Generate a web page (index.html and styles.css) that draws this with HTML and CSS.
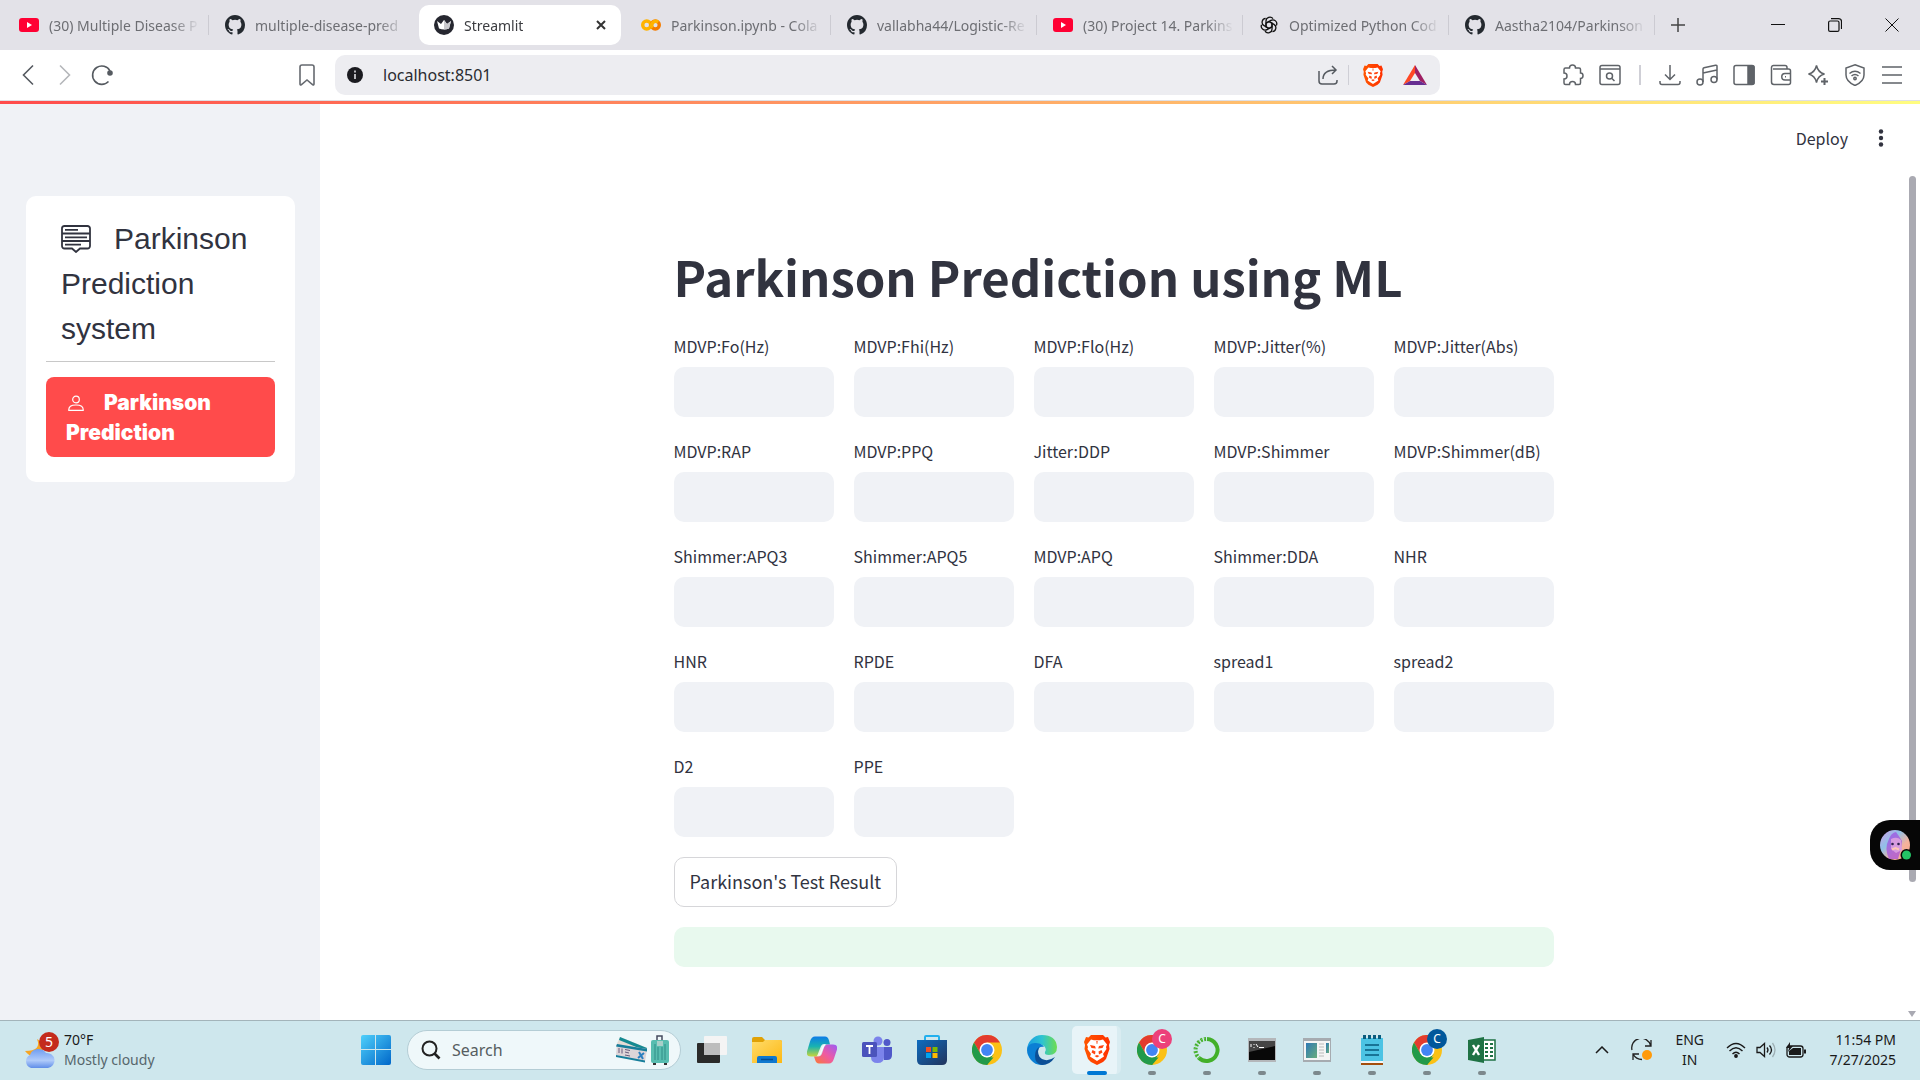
FILE: index.html
```html
<!DOCTYPE html>
<html lang="en">
<head>
<meta charset="utf-8">
<meta name="viewport" content="width=device-width, initial-scale=1">
<title>Streamlit</title>
<link rel="stylesheet" href="styles.css">
</head>
<body>
<svg class="defs" aria-hidden="true">
  <defs>
    <linearGradient id="g-win" x1="0" y1="0" x2="1" y2="1"><stop offset="0" stop-color="#4fd0fb"/><stop offset="1" stop-color="#0067c9"/></linearGradient>
    <linearGradient id="g-folder" x1="0" y1="0" x2="1" y2="1"><stop offset="0" stop-color="#ffdc6b"/><stop offset="1" stop-color="#fdb813"/></linearGradient>
    <linearGradient id="g-store" x1="0" y1="0" x2="1" y2="1"><stop offset="0" stop-color="#0d6cc0"/><stop offset="1" stop-color="#22345c"/></linearGradient>
    <linearGradient id="g-cop1" x1="0" y1="0" x2="0" y2="1"><stop offset="0" stop-color="#0d7be8"/><stop offset=".5" stop-color="#19b3b0"/><stop offset="1" stop-color="#c8d63a"/></linearGradient>
    <linearGradient id="g-cop2" x1="1" y1="0" x2="0" y2="1"><stop offset="0" stop-color="#9b5cf6"/><stop offset=".5" stop-color="#ee5aa3"/><stop offset="1" stop-color="#fb7a33"/></linearGradient>
    <linearGradient id="g-edge1" x1="0" y1="0" x2="1" y2="0"><stop offset="0" stop-color="#1b9de2"/><stop offset=".5" stop-color="#2cc3d2"/><stop offset="1" stop-color="#6fdd4e"/></linearGradient>
    <linearGradient id="g-brave" x1="0" y1="0" x2="1" y2="0"><stop offset="0" stop-color="#ff5601"/><stop offset="1" stop-color="#ff3000"/></linearGradient>
    <linearGradient id="g-cloud" x1="0" y1="0" x2="0" y2="1"><stop offset="0" stop-color="#6f9df0"/><stop offset=".6" stop-color="#b0cbfa"/><stop offset="1" stop-color="#5f8de8"/></linearGradient>
    <linearGradient id="g-app" x1="0" y1="0" x2="1" y2="1"><stop offset="0" stop-color="#2f79b5"/><stop offset="1" stop-color="#69ad7c"/></linearGradient>
    <linearGradient id="g-face" x1="0" y1="0" x2="1" y2="1"><stop offset="0" stop-color="#d49ce8"/><stop offset=".35" stop-color="#8fc0e8"/><stop offset=".65" stop-color="#f5b29c"/><stop offset="1" stop-color="#f7a98a"/></linearGradient>
    <symbol id="youtube" viewBox="0 0 20 20"><rect y="3" width="20" height="14" rx="3" fill="#ff0033"/><path d="M8 7l5 3-5 3z" fill="#fff"/></symbol>
    <symbol id="github" viewBox="0 0 16 16"><path fill="#24292f" d="M8 0C3.58 0 0 3.58 0 8c0 3.54 2.29 6.53 5.47 7.59.4.07.55-.17.55-.38 0-.19-.01-.82-.01-1.49-2.01.37-2.53-.49-2.69-.94-.09-.23-.48-.94-.82-1.13-.28-.15-.68-.52-.01-.53.63-.01 1.08.58 1.23.82.72 1.21 1.87.87 2.33.66.07-.52.28-.87.51-1.07-1.78-.2-3.64-.89-3.64-3.95 0-.87.31-1.59.82-2.15-.08-.2-.36-1.02.08-2.12 0 0 .67-.21 2.2.82a7.6 7.6 0 0 1 4 0c1.53-1.04 2.2-.82 2.2-.82.44 1.1.16 1.92.08 2.12.51.56.82 1.27.82 2.15 0 3.07-1.87 3.75-3.65 3.95.29.25.54.73.54 1.48 0 1.07-.01 1.93-.01 2.2 0 .21.15.46.55.38A8.01 8.01 0 0 0 16 8c0-4.42-3.58-8-8-8z"/></symbol>
    <symbol id="streamlit" viewBox="0 0 20 20"><circle cx="10" cy="10" r="10" fill="#262730"/><path d="M3 6l4 3 3-4 3 4 4-3-2 7.500q-5 2-10 0z" fill="#fff"/><path d="M10 5l3 4 4-3-2 7.500q-2.500 1-5 1z" fill="#c9c9cd"/></symbol>
    <symbol id="colab" viewBox="0 0 20 20"><g fill="none" stroke-width="3.400"><circle cx="5.700" cy="10" r="4" stroke="#ffb300"/><circle cx="14.300" cy="10" r="4" stroke="#f57c00"/><path d="M11.500 12.800a4 4 0 0 1 5.600-5.600" stroke="#ffb300"/></g></symbol>
    <symbol id="openai" viewBox="0 0 20 20"><g fill="none" stroke="#111" stroke-width="1.300"><path id="petal" d="M7 11.700V6a3.900 3.900 0 0 1 7-2.300M7 8.300l4.900-2.900a3.900 3.900 0 0 1 5.500 5"/><use href="#petal" transform="rotate(120 10 10)"/><use href="#petal" transform="rotate(240 10 10)"/><path d="M10 6.500l3 1.700v3.600l-3 1.700-3-1.700V8.200z"/></g></symbol>
    <symbol id="brave" viewBox="0 0 26 30"><path fill="url(#g-brave)" d="M7 0h12l2.500 2.500L24 2l2 5-1 3 .5 4-3.500 10-3 3-6 3-6-3-3-3L.5 14 1 10 0 7l2-5 2.500.5z"/><path fill="#fff" d="M7 4.500l3 .8h6l3-.8 4 5-1 2.500.5 2-3.500 5 1 2.500-7 4.500-7-4.500 1-2.500-3.500-5 .5-2-1-2.500z"/><path fill="#ff4510" d="M6 10l5 1 .8 2.500-4.300-.5zM20 10l-5 1-.8 2.500 4.300-.5zM8.500 15l3 1.500-.5 3-3.500-2zM17.500 15l-3 1.500.5 3 3.500-2zM10.500 21l2.500-1 2.500 1-2.500 1.500zM12.300 6h1.400l-.4 3h-.6z"/></symbol>
    <symbol id="chrome" viewBox="0 0 30 30"><circle cx="15" cy="15" r="15" fill="#fbc116"/><path fill="#e33b2e" d="M2 7.500a15 15 0 0 1 26 0H15v7.500l-6.500 3.800z"/><path fill="#229a4a" d="M2 7.500l6.500 11.300L15 22.500h6.500L15 30A15 15 0 0 1 2 7.500z"/><path fill="#229a4a" d="M15 22.500l6.500-3.800L15 30z"/><circle cx="15" cy="15" r="7.500" fill="#fff"/><circle cx="15" cy="15" r="5.900" fill="#4285f4"/></symbol>
  </defs>
</svg>

<header class="browser">
  <nav class="tabs" aria-label="Tabs">
    <a class="tab" href="#"><svg class="fav"><use href="#youtube"/></svg><span class="tab-text">(30) Multiple Disease P</span></a>
    <a class="tab no-line" href="#"><svg class="fav"><use href="#github"/></svg><span class="tab-text">multiple-disease-pred</span></a>
    <div class="tab active"><svg class="fav"><use href="#streamlit"/></svg><span class="tab-text">Streamlit</span><button class="bare" aria-label="Close tab"><svg width="10" height="10" viewBox="0 0 10 10"><path d="M1 1l8 8M9 1L1 9" stroke="#333" stroke-width="2"/></svg></button></div>
    <a class="tab" href="#"><svg class="fav"><use href="#colab"/></svg><span class="tab-text">Parkinson.ipynb - Cola</span></a>
    <a class="tab" href="#"><svg class="fav"><use href="#github"/></svg><span class="tab-text">vallabha44/Logistic-Re</span></a>
    <a class="tab" href="#"><svg class="fav"><use href="#youtube"/></svg><span class="tab-text">(30) Project 14. Parkins</span></a>
    <a class="tab" href="#"><svg class="fav"><use href="#openai"/></svg><span class="tab-text">Optimized Python Cod</span></a>
    <a class="tab" href="#"><svg class="fav"><use href="#github"/></svg><span class="tab-text">Aastha2104/Parkinson</span></a>
    <button class="bare new-tab" aria-label="New tab"><svg width="14" height="14" viewBox="0 0 14 14"><path d="M7 0v14M0 7h14" stroke="#444" stroke-width="1.500"/></svg></button>
    <div class="window-buttons">
      <button class="bare" aria-label="Minimize"><svg width="14" height="14" viewBox="0 0 14 14"><path d="M0 6.500h14" stroke="#111"/></svg></button>
      <button class="bare" aria-label="Restore"><svg width="14" height="14" viewBox="0 0 14 14" fill="none" stroke="#111" stroke-width="1.200"><rect x=".6" y="3" width="10.400" height="10.400" rx="1.500"/><path d="M3 .6h7.500a3 3 0 0 1 3 3V11"/></svg></button>
      <button class="bare" aria-label="Close"><svg width="14" height="14" viewBox="0 0 14 14"><path d="M.5 .5l13 13M13.500 .5l-13 13" stroke="#111"/></svg></button>
    </div>
  </nav>
  <div class="toolbar">
    <div class="nav-buttons">
      <button class="bare" aria-label="Back"><svg width="22" height="22" viewBox="0 0 22 22" fill="none" stroke="#555a60" stroke-width="1.600"><path d="M16 1.500L6.500 11l9.500 9.500"/></svg></button>
      <button class="bare" aria-label="Forward"><svg width="22" height="22" viewBox="0 0 22 22" fill="none" stroke="#b5b7ba" stroke-width="1.600"><path d="M6 1.500l9.500 9.500L6 20.500"/></svg></button>
      <button class="bare" aria-label="Reload"><svg width="22" height="22" viewBox="0 0 22 22" fill="none" stroke="#555a60" stroke-width="1.600"><path d="M17.500 17.500A9.200 9.200 0 1 1 19 7"/><circle cx="19" cy="9" r="2" fill="#555a60"/></svg></button>
    </div>
    <button class="bare" aria-label="Bookmark"><svg width="16" height="22" viewBox="0 0 16 22" fill="none" stroke="#666a70" stroke-width="1.600"><path d="M1 20V3a2 2 0 0 1 2-2h10a2 2 0 0 1 2 2v17q0 1.500-1.500.5L8 16l-5.500 4.500Q1 21.500 1 20z"/></svg></button>
    <div class="address">
      <svg width="16" height="16" viewBox="0 0 16 16"><circle cx="8" cy="8" r="8" fill="#1b1b20"/><path d="M8 7v5M8 3.500v2" stroke="#ededf1" stroke-width="1.500"/></svg>
      <input class="url" type="text" value="localhost:8501" aria-label="Address">
      <svg width="20" height="20" viewBox="0 0 20 20" fill="none" stroke="#555a60" stroke-width="1.500"><path d="M1 6v10a3 3 0 0 0 3 3h12a3 3 0 0 0 3-3v-1M5 14c0-6 4-9 13-9M14 1l4 4-4 4"/></svg>
      <span class="rule"></span>
      <svg class="addr-brave" width="20" height="23"><use href="#brave"/></svg>
      <svg width="24" height="20" viewBox="0 0 24 20"><path d="M12 0L0 20l7-4 5-8z" fill="#ff4724"/><path d="M12 0l12 20-7-4-5-8z" fill="#9e1f63"/><path d="M0 20h24l-7-4H7z" fill="#662d91"/></svg>
    </div>
    <div class="extensions">
      <button class="bare" aria-label="Extensions"><svg class="line-icon" viewBox="0 0 22 22"><path d="M3.500 4h4a3 3 0 1 1 6 0H17q1.500 0 1.500 1.500V9q2.500 0 2.500 2.700t-2.500 2.800v4.500q0 1.500-1.500 1.500h-3.500q0-3-3-3t-3 3h-4Q2 20.500 2 19v-4q3 0 3-3T2 9V5.500Q2 4 3.500 4z"/></svg></button>
      <button class="bare" aria-label="Search page"><svg class="line-icon" viewBox="0 0 22 22"><rect x="1" y="1.500" width="20" height="19" rx="2"/><path d="M1 5h20"/><circle cx="10.500" cy="12" r="3"/><path d="M13 14.500l2.500 2.500"/></svg></button>
      <span class="rule wide"></span>
      <button class="bare" aria-label="Downloads"><svg class="line-icon" viewBox="0 0 22 22"><path d="M11 1v14M6 10.500l5 5 5-5M1 17v1.500a2 2 0 0 0 2 2h16a2 2 0 0 0 2-2V17"/></svg></button>
      <button class="bare" aria-label="Media"><svg class="line-icon" viewBox="0 0 22 22"><circle cx="4" cy="18" r="3"/><circle cx="18" cy="15.500" r="3"/><path d="M7 18V5q0-1 1-1.300l11.500-2.500q1.500-.2 1.500 1V15.500M7 9l14-3"/></svg></button>
      <button class="bare" aria-label="Sidebar"><svg class="line-icon" viewBox="0 0 22 22"><rect x="1" y="1.500" width="20" height="19" rx="2"/><path d="M15 2h5q1 0 1 1v16q0 1-1 1h-5z" fill="#5f6368"/></svg></button>
      <button class="bare" aria-label="Wallet"><svg class="line-icon" viewBox="0 0 22 22"><path d="M17 5V3.500a2 2 0 0 0-2-2H3.500a2 2 0 0 0-2 2V18a2.500 2.500 0 0 0 2.500 2.500h14.500a2 2 0 0 0 2-2V7a2 2 0 0 0-2-2H3M21 9.500h-6a3 3 0 0 0 0 6.500h6M15 12.700h1"/></svg></button>
      <button class="bare" aria-label="Assistant"><svg class="line-icon" viewBox="0 0 22 22"><path d="M9.500 1.500q1.500 7 8 8.500-6.500 1.500-8 8.500-1.500-7-8-8.500 6.500-1.500 8-8.500z"/><path d="M17.500 14v7M14 17.500h7" stroke-width="2"/></svg></button>
      <button class="bare" aria-label="VPN"><svg class="line-icon" viewBox="0 0 22 22"><path d="M11 .8l9 3.200v7q0 6.500-9 10.500-9-4-9-10.500V4zM5.500 9.500q5.500-4.500 11 0M7.500 12q3.500-3 7 0"/><circle cx="11" cy="14.500" r="1.200"/></svg></button>
      <button class="bare" aria-label="Menu"><svg class="line-icon" viewBox="0 0 22 22"><path d="M1 3h20M1 11h20M1 19h20"/></svg></button>
    </div>
  </div>
</header>
<div class="decoration"></div>

<div class="app">
  <aside class="sidebar">
    <div class="menu-card">
      <h2 class="menu-title"><svg class="menu-icon" viewBox="0 0 30 28" fill="none" stroke="#31333f" stroke-width="1.800"><path d="M1 3a2.500 2.500 0 0 1 2.500-2h23A2.500 2.500 0 0 1 29 3.500V21a2.500 2.500 0 0 1-2.500 2.500H19L15 27l-4-3.500H3.500A2.500 2.500 0 0 1 1 21zM1 8.500h28M1 16h28M4 4.800h13M4 12.300h22M4 19.700h16"/></svg>Parkinson Prediction system</h2>
      <hr class="menu-rule">
      <a class="menu-item" href="#"><svg class="person" viewBox="0 0 16 16" fill="none" stroke="#fff" stroke-width="1.200"><circle cx="8" cy="4.500" r="3.300"/><path d="M.8 15.300q-.4-5.300 7.200-5.300t7.200 5.300z"/></svg>Parkinson Prediction</a>
    </div>
  </aside>
  <main class="main">
    <div class="app-bar"><button class="bare deploy">Deploy</button><button class="bare" aria-label="Main menu"><svg width="6" height="18" viewBox="0 0 6 18" fill="#31333f"><circle cx="3" cy="2.500" r="2.200"/><circle cx="3" cy="9" r="2.200"/><circle cx="3" cy="15.500" r="2.200"/></svg></button></div>
    <form class="content">
      <h1 class="title">Parkinson Prediction using ML</h1>
      <div class="fields">
        <label class="field">MDVP:Fo(Hz)<input class="box" type="text"></label>
        <label class="field">MDVP:Fhi(Hz)<input class="box" type="text"></label>
        <label class="field">MDVP:Flo(Hz)<input class="box" type="text"></label>
        <label class="field">MDVP:Jitter(%)<input class="box" type="text"></label>
        <label class="field">MDVP:Jitter(Abs)<input class="box" type="text"></label>
        <label class="field">MDVP:RAP<input class="box" type="text"></label>
        <label class="field">MDVP:PPQ<input class="box" type="text"></label>
        <label class="field">Jitter:DDP<input class="box" type="text"></label>
        <label class="field">MDVP:Shimmer<input class="box" type="text"></label>
        <label class="field">MDVP:Shimmer(dB)<input class="box" type="text"></label>
        <label class="field">Shimmer:APQ3<input class="box" type="text"></label>
        <label class="field">Shimmer:APQ5<input class="box" type="text"></label>
        <label class="field">MDVP:APQ<input class="box" type="text"></label>
        <label class="field">Shimmer:DDA<input class="box" type="text"></label>
        <label class="field">NHR<input class="box" type="text"></label>
        <label class="field">HNR<input class="box" type="text"></label>
        <label class="field">RPDE<input class="box" type="text"></label>
        <label class="field">DFA<input class="box" type="text"></label>
        <label class="field">spread1<input class="box" type="text"></label>
        <label class="field">spread2<input class="box" type="text"></label>
        <label class="field">D2<input class="box" type="text"></label>
        <label class="field">PPE<input class="box" type="text"></label>
      </div>
      <button class="submit" type="button">Parkinson's Test Result</button>
      <output class="result"></output>
    </form>
    <div class="scrollbar"><span class="thumb"></span><svg width="8" height="6" viewBox="0 0 8 6"><path d="M0 0h8L4 6z" fill="#a9a9b2"/></svg></div>
    <button class="bare assistant" aria-label="Assistant"><svg width="34" height="34" viewBox="0 0 34 34"><circle cx="15" cy="15" r="15" fill="url(#g-face)"/><path d="M9 29q-5-11 0-20 2-6 7-7 3 4 6 9l-1 8-3 10z" fill="#a14be0" opacity=".7"/><path d="M11 9q6-3 10 1l1 10-6 3-5-4z" fill="#d79be0"/><circle cx="12.500" cy="14" r="1.300" fill="#302050"/><circle cx="18.500" cy="14" r="1.300" fill="#302050"/><path d="M12 19.500l3.500-1.500 3.500 1.500" stroke="#ffc6b4" stroke-width="2" fill="none"/><circle cx="26.500" cy="25" r="6" fill="#060606"/><circle cx="26.500" cy="25" r="4.500" fill="#24c466"/></svg></button>
  </main>
</div>

<footer class="taskbar">
  <div class="weather">
    <svg width="35" height="37" viewBox="0 0 35 37"><path d="M13 7q5 12-12 12 8 10 16 2 7-8-4-14z" fill="#f6a523"/><path d="M7 36a7 7 0 0 1-1-13 9 9 0 0 1 16-2 7.500 7.500 0 1 1 2 15z" fill="url(#g-cloud)"/><circle cx="25" cy="10" r="10" fill="#c42b1c"/><text x="25" y="15" text-anchor="middle" class="badge-count">5</text></svg>
    <div class="two-lines"><span>70°F</span><span class="muted">Mostly cloudy</span></div>
  </div>
  <div class="apps">
    <button class="bare start" aria-label="Start"><svg width="30" height="30" viewBox="0 0 30 30" fill="url(#g-win)"><path d="M2 0h12v14H0V2q0-2 2-2zM15 0h13q2 0 2 2v12H15zM0 15h14v15H2q-2 0-2-2zM15 15h15v13q0 2-2 2H15z"/></svg></button>
    <label class="search">
      <svg width="20" height="20" viewBox="0 0 20 20" fill="none" stroke="#222" stroke-width="2"><circle cx="8.500" cy="8.500" r="7"/><path d="M13.500 13.500l5 5" stroke-width="2.600"/></svg>
      <input class="search-input" type="text" placeholder="Search" aria-label="Search">
      <svg width="54" height="30" viewBox="0 0 54 30"><path d="M5 2l27 11-2 6L1 11z" fill="#e5dcd5"/><path d="M5 2l27 11-1 3L4 5z" fill="#148a92"/><path d="M2 9l30 5-2 13L1 20z" fill="#ddd5d8"/><path d="M2 9l30 5v2.500L1 11.500zM1 20l29 5.500v2L1 22z" fill="#167e9b"/><path d="M4 13v5M7 13.500v5M10 14.500l5 1M10 17l4 1M10 20l5 1" stroke="#665b7c"/><path d="M24 17l4 7M29 18l-6 5" stroke="#2a7fc0" stroke-width="2"/><path d="M42 6V1h5v5" fill="none" stroke="#454a5e" stroke-width="1.500"/><rect x="36" y="5" width="18" height="23" rx="2" fill="#58bdb0"/><path d="M40 9v16M43 12v13M47 12v13M50 9v16" stroke="#2f8c86"/><path d="M42 6h6v5h-6z" fill="#a9cfc9"/><path d="M38 29h3M49 29h3" stroke="#333" stroke-width="2"/></svg>
    </label>
    <button class="bare cell" aria-label="Task view"><svg width="30" height="30" viewBox="0 0 30 30"><rect y="8" width="23" height="20" rx="1" fill="#2b2b2a"/><rect x="7" y="1" width="23" height="19" rx="1" fill="#f4f4f4"/><path d="M7 8h16v12H7z" fill="#bdbdbd"/></svg></button>
    <button class="bare cell" aria-label="File Explorer"><svg width="30" height="30" viewBox="0 0 30 30"><path d="M0 4q0-2 2-2h8l3 3h15q2 0 2 2v4H0z" fill="#e0a106"/><path d="M0 7h11l2-2h15q2 0 2 2v21H0z" fill="url(#g-folder)"/><path d="M5 28v-5q0-2 2-2h16q2 0 2 2v5z" fill="#0f78cf"/><path d="M9 24.500h12" stroke="#064d92" stroke-width="1.500"/></svg></button>
    <button class="bare cell" aria-label="Copilot"><svg width="30" height="30" viewBox="0 0 30 30"><path d="M8 1.500h10q3 0 4 4l1 4h-4q-3 0-4 3l-2 6q-1 3-4 3H4q-5 0-4-5l3-10q1.500-5 5-5z" fill="url(#g-cop1)"/><path d="M22 28.500H12q-3 0-4-4l-1-3h4q3 0 4-3l2-6q1-3 4-3h5q5 0 4 5l-3 9q-1.500 5-5 5z" fill="url(#g-cop2)"/><path d="M14 11q1-2 3-2h2q-2 2-3 5l-2 5q-1 2-3 2h-1q1-2 2-5z" fill="#fff" opacity=".85"/></svg></button>
    <button class="bare cell" aria-label="Teams"><svg width="30" height="30" viewBox="0 0 30 30"><circle cx="25" cy="7.500" r="3.500" fill="#5059c9"/><circle cx="16" cy="6" r="4.500" fill="#7b83eb"/><path d="M20 12h10v8q0 5-5 5h-3z" fill="#5059c9"/><path d="M9 12h13v10q0 6-6.500 6T9 22z" fill="#7b83eb"/><rect y="7" width="15" height="15" rx="1.500" fill="#4b53bc"/><path d="M4 11h7M7.500 11v8" stroke="#fff" stroke-width="1.800"/></svg></button>
    <button class="bare cell" aria-label="Store"><svg width="30" height="30" viewBox="0 0 30 30"><path d="M8 7V2q0-1 1-1h12q1 0 1 1v5" fill="none" stroke="#22b0ee" stroke-width="2"/><path d="M0 5h30v20q0 5-5 5H5q-5 0-5-5z" fill="url(#g-store)"/><path d="M9 12h5v5H9z" fill="#f25022"/><path d="M15.500 12h5v5h-5z" fill="#7fba00"/><path d="M9 18h5v5H9z" fill="#00a4ef"/><path d="M15.500 18h5v5h-5z" fill="#ffb900"/></svg></button>
    <button class="bare cell" aria-label="Chrome"><svg width="30" height="30"><use href="#chrome"/></svg></button>
    <button class="bare cell" aria-label="Edge"><svg width="30" height="30" viewBox="0 0 30 30"><path d="M0 15A15 15 0 0 1 15 0q14 0 15 12 0 8-8 8-5 0-4-3 2-3-1-6Q9 5 0 15z" fill="url(#g-edge1)"/><path d="M0 15Q1 8 8 8q7 0 9 4-6-1-6 5 0 9 8 12Q10 32 4 25 0 20 0 15z" fill="#0b7fd4"/><path d="M12 12q-3 8 3 12 6 3 13-2-5 8-13 8-7-1-7-9 0-6 4-9z" fill="#0c4f96"/></svg></button>
    <button class="bare cell current" aria-label="Brave"><svg width="26" height="30"><use href="#brave"/></svg></button>
    <button class="bare cell running" aria-label="Chrome profile"><svg width="30" height="30"><use href="#chrome"/></svg><span class="profile pink">C</span></button>
    <button class="bare cell running" aria-label="Anaconda"><svg width="28" height="28" viewBox="0 0 28 28" fill="none"><path d="M14 3a11 11 0 1 1-8 19" stroke="#43b02a" stroke-width="4"/><path d="M13 3A11 11 0 0 0 6 22" stroke="#43b02a" stroke-width="4" stroke-dasharray="2 1.500"/><path d="M12 2A13 13 0 0 0 4 22" stroke="#8fd47f" stroke-dasharray="1 2"/></svg></button>
    <button class="bare cell running" aria-label="Command Prompt"><svg width="28" height="24" viewBox="0 0 28 24"><path d="M0 0h28v24H0z" fill="#b4b7ba"/><path d="M1 3h26v19H1z" fill="#080808"/><path d="M1 3h26v5L1 14z" fill="#454545"/><path d="M3 6v3M6 6v1M6 9v1M8 6l2 3M11 9.500h5" stroke="#fff"/></svg></button>
    <button class="bare cell running" aria-label="Application"><svg width="28" height="24" viewBox="0 0 28 24"><path d="M0 0h28v24H0z" fill="#a6abb0"/><path d="M1 3h26v19H1z" fill="#f5f5f5"/><path d="M3 5h11v15H3z" fill="url(#g-app)"/><path d="M16 6h5M16 9h5M16 12h5M16 15h5M16 18h5" stroke="#bbb"/><path d="M23 5h3v10h-3z" fill="url(#g-app)"/></svg></button>
    <button class="bare cell running" aria-label="Notepad"><svg width="22" height="30" viewBox="0 0 22 30"><path d="M0 3h22v23H0z" fill="#4cc3e4"/><path d="M0 26h22v2H0z" fill="#f5f5f5"/><path d="M0 28h22v2H0z" fill="#a34e0d"/><path d="M4 10h14M4 15h14M4 20h14" stroke="#07597c" stroke-width="1.600"/><path d="M2 2h3M7 2h3M12 2h3M17 2h3" stroke="#0a5c7e" stroke-width="4"/></svg></button>
    <button class="bare cell running" aria-label="Chrome profile 2"><svg width="30" height="30"><use href="#chrome"/></svg><span class="profile blue">C</span></button>
    <button class="bare cell running" aria-label="Excel"><svg width="28" height="26" viewBox="0 0 28 26"><path d="M14 3h13v20H14z" fill="#fff" stroke="#1f7244" stroke-width="1.500"/><path d="M17 7h3M22 7h3M17 11h3M22 11h3M17 15h3M22 15h3M17 19h3M22 19h3" stroke="#1f7244" stroke-width="2"/><path d="M0 3l16-3v26L0 23z" fill="#1f7244"/><path d="M5 8l6 10M11 8L5 18" stroke="#fff" stroke-width="2.400"/></svg></button>
  </div>
  <div class="tray">
    <button class="bare" aria-label="Hidden icons"><svg width="14" height="8" viewBox="0 0 14 8"><path d="M1 7l6-6 6 6" fill="none" stroke="#1a1a1a" stroke-width="1.500"/></svg></button>
    <svg class="sync" width="22" height="22" viewBox="0 0 22 22" fill="none" stroke="#222" stroke-width="1.300"><path d="M1 11A9.200 9.200 0 0 1 19.500 6.500M20 1v6h-6M2 21v-6h6M2 15q3 5.500 9 5.500"/><circle cx="16" cy="16" r="5" fill="#ff9a0a" stroke="none"/></svg>
    <div class="two-lines lang"><span>ENG</span><span>IN</span></div>
    <div class="status">
      <svg width="20" height="16" viewBox="0 0 20 16" fill="none" stroke="#1a1a1a" stroke-width="1.400"><path d="M1 6q9-9 18 0M3.500 9q6.500-6.500 13 0M6.500 12q3.500-3.500 7 0"/><circle cx="10" cy="14" r="1.200" fill="#1a1a1a"/></svg>
      <svg width="20" height="16" viewBox="0 0 20 16" fill="none" stroke="#1a1a1a" stroke-width="1.300"><path d="M1 5.500h3l4.500-4v13l-4.500-4H1zM11 5.500q2 2.500 0 5M13.500 3.500q4 4.500 0 9"/><path d="M16.500 1q5 7 0 14" stroke="#9fb0b5"/></svg>
      <svg width="20" height="16" viewBox="0 0 20 16"><rect x="1" y="4" width="16" height="11" rx="2.500" fill="none" stroke="#1a1a1a" stroke-width="1.300"/><path d="M3 13V9l4-3h8v7zM18 7.500h2v4h-2z" fill="#1a1a1a"/><path d="M4 0L0 6h3l-1 4 5-6H4z" fill="#1a1a1a"/></svg>
    </div>
    <div class="two-lines clock"><span>11:54 PM</span><span>7/27/2025</span></div>
  </div>
</footer>
</body>
</html>
```
FILE: styles.css
```css
* { box-sizing: border-box; }

:root {
  --ui: "Noto Sans", "Open Sans", sans-serif;
  --app: "Noto Sans CJK SC", "Noto Sans", sans-serif;
  --ink: #31333f;
  --panel: #f0f2f6;
}

body {
  margin: 0;
  min-height: 100vh;
  display: flex;
  flex-direction: column;
  font-family: var(--ui);
  font-size: 14px;
  color: #1a1a1a;
  background: #fff;
}

svg { display: block; flex: none; }
.defs { position: absolute; width: 0; height: 0; }
a { color: inherit; text-decoration: none; }
.bare {
  display: flex;
  align-items: center;
  justify-content: center;
  padding: 0;
  border: 0;
  background: none;
  font: inherit;
  color: inherit;
}
input { border: 0; padding: 0; background: none; font: inherit; color: inherit; min-width: 0; outline: 0; }

/* Browser chrome */
.tabs {
  display: flex;
  align-items: center;
  height: 50px;
  padding-left: 3px;
  background: #e3e2e8;
}
.tab {
  flex: 0 1 206px;
  min-width: 0;
  height: 20px;
  display: flex;
  align-items: center;
  gap: 10px;
  padding: 0 8px 0 16px;
  border-right: 1px solid #cccbd2;
  color: #6d6e73;
}
.no-line { border-color: transparent; }
.active {
  flex-basis: 202px;
  height: 40px;
  margin: 0 4px;
  padding: 0 15px;
  border: 0;
  border-radius: 10px;
  background: #fff;
  color: #3b3c40;
}
.fav { width: 20px; height: 20px; }
.tab-text {
  flex: 1;
  overflow: hidden;
  white-space: nowrap;
  mask-image: linear-gradient(to right, #000 calc(100% - 28px), transparent);
}
.new-tab { width: 46px; height: 40px; }
.window-buttons { display: flex; margin-left: auto; }
.window-buttons .bare { width: 57px; height: 50px; }

.toolbar {
  display: flex;
  align-items: center;
  height: 51px;
  padding-right: 17px;
  border-bottom: 1px solid #dfe0e5;
}
.nav-buttons { display: flex; gap: 15px; flex: 1 1 299px; padding-left: 17px; }
.address {
  flex: 1 1 1105px;
  display: flex;
  align-items: center;
  height: 40px;
  margin-left: 20px;
  padding: 0 13px 0 12px;
  border-radius: 10px;
  background: #ededf1;
}
.url { flex: 1; margin-left: 20px; font-size: 16px; color: #2a2b30; }
.rule { width: 1px; height: 20px; margin: 0 14px 0 10px; background: #cfcfd6; }
.addr-brave { margin-right: 20px; }
.extensions { flex: 0 1 463px; display: flex; align-items: center; justify-content: flex-end; gap: 15px; }
.line-icon { width: 22px; height: 22px; fill: none; stroke: #5f6368; stroke-width: 1.5; }
.wide { width: 2px; margin: 0 3px; }

.decoration { height: 3px; background: linear-gradient(to right, #ff4b4b, #fffd80); }

/* Application */
.app { flex: 1; display: flex; }
.sidebar { flex: none; width: 320px; padding: 92px 25px 0 26px; background: var(--panel); }
.menu-card { padding: 20px 20px 25px; border-radius: 10px; background: #fff; }
.menu-title {
  margin: 0;
  padding: 0 15px 10px;
  font: 400 30px/45px "Liberation Sans", Arial, sans-serif;
  color: var(--ink);
}
.menu-icon { display: inline-block; width: 30px; height: 28px; margin-right: 23px; vertical-align: -4px; }
.menu-rule { margin: 0 0 15px; border: 0; border-top: 1px solid #c8c8c8; }
.menu-item {
  display: block;
  padding: 11px 20px 9px;
  border-radius: 8px;
  background: #ff4b4b;
  color: #fff;
  font: 900 21px/30px Inter, "Open Sans", sans-serif;
}
.person { display: inline-block; width: 16px; height: 16px; margin: 0 20px 0 2px; vertical-align: -1px; }

.main { flex: 1; display: flex; position: relative; min-width: 0; }
.app-bar { position: absolute; top: 19px; right: 36px; display: flex; align-items: center; gap: 30px; height: 30px; color: var(--ink); }
.deploy { font: 400 16px/24px var(--app); }
.content {
  flex: 1;
  max-width: 880px;
  margin: 0 auto;
  padding: 136px 0 52px;
  font-family: var(--app);
  color: var(--ink);
}
.title { margin: 0 0 20px; font-size: 49px; line-height: 72px; font-weight: 700; white-space: nowrap; }
.fields { display: grid; grid-template-columns: repeat(5, 1fr); gap: 20px; }
.field { display: flex; flex-direction: column; gap: 7px; min-width: 0; font-size: 16px; line-height: 28px; }
.box { height: 50px; padding: 0 14px; border-radius: 10px; background: var(--panel); }
.submit {
  display: block;
  height: 50px;
  margin: 20px 0;
  padding: 0 15px 2px;
  border: 1px solid #d6d6d9;
  border-radius: 10px;
  background: #fff;
  color: var(--ink);
  font: 400 18px/28px var(--app);
}
.result { display: block; height: 40px; border-radius: 10px; background: #e8f9ee; }
.scrollbar { width: 13px; display: flex; flex-direction: column; align-items: center; justify-content: space-between; padding: 72px 3px 3px 0; }
.thumb { width: 7px; height: 84%; border-radius: 4px; background: #aaaab2; }
.assistant {
  position: absolute;
  right: 0;
  bottom: 150px;
  width: 50px;
  height: 50px;
  padding: 4px 0 0 4px;
  border-radius: 20px 0 0 20px;
  background: #060606;
}

/* Taskbar */
.taskbar {
  position: relative;
  display: flex;
  align-items: center;
  height: 60px;
  padding-bottom: 1px;
  border-top: 1px solid #a3b4ba;
  background: #cee7ed;
}
.weather { display: flex; flex: 1 1 361px; align-items: center; gap: 5px; padding-left: 24px; }
.badge-count { font: 14px var(--ui); fill: #fff; }
.two-lines { display: flex; flex-direction: column; line-height: 20px; }
.muted { color: #56666c; }
.apps { display: flex; align-items: center; }
.start { margin-right: 16px; }
.search {
  display: flex;
  align-items: center;
  width: 274px;
  height: 40px;
  margin-right: 3px;
  padding: 0 11px 0 13px;
  border: 1px solid #b4cdd5;
  border-radius: 20px;
  background: #eff8fa;
}
.search-input { flex: 1; margin-left: 11px; font-size: 16px; }
.search-input::placeholder { color: #565d60; opacity: 1; }
.cell { position: relative; width: 55px; height: 50px; }
.current svg { z-index: 1; }
.current::before {
  content: "";
  position: absolute;
  inset: 1px 3px;
  border-radius: 5px;
  border-right: 4px solid #d9ecf1;
  background: #e8f4f8;
}
.current::after, .running::after {
  content: "";
  position: absolute;
  bottom: 0;
  left: 50%;
  width: 8px;
  height: 4px;
  margin-left: -4px;
  border-radius: 2px;
  background: #7c888c;
}
.current::after { width: 20px; margin-left: -10px; background: #0078d4; }
.profile {
  position: absolute;
  top: 4px;
  right: 7px;
  width: 20px;
  height: 20px;
  border-radius: 10px;
  font-size: 12px;
  line-height: 20px;
  color: #fff;
}
.pink { background: #ec407a; }
.blue { background: #01579b; }
.tray { flex: 1 1 411px; display: flex; align-items: center; justify-content: flex-end; padding-right: 24px; }
.sync { margin: 0 22px; }
.lang { align-items: center; }
.status { display: flex; gap: 10px; margin: 0 22px; }
.clock { align-items: flex-end; width: 68px; white-space: nowrap; }
```
